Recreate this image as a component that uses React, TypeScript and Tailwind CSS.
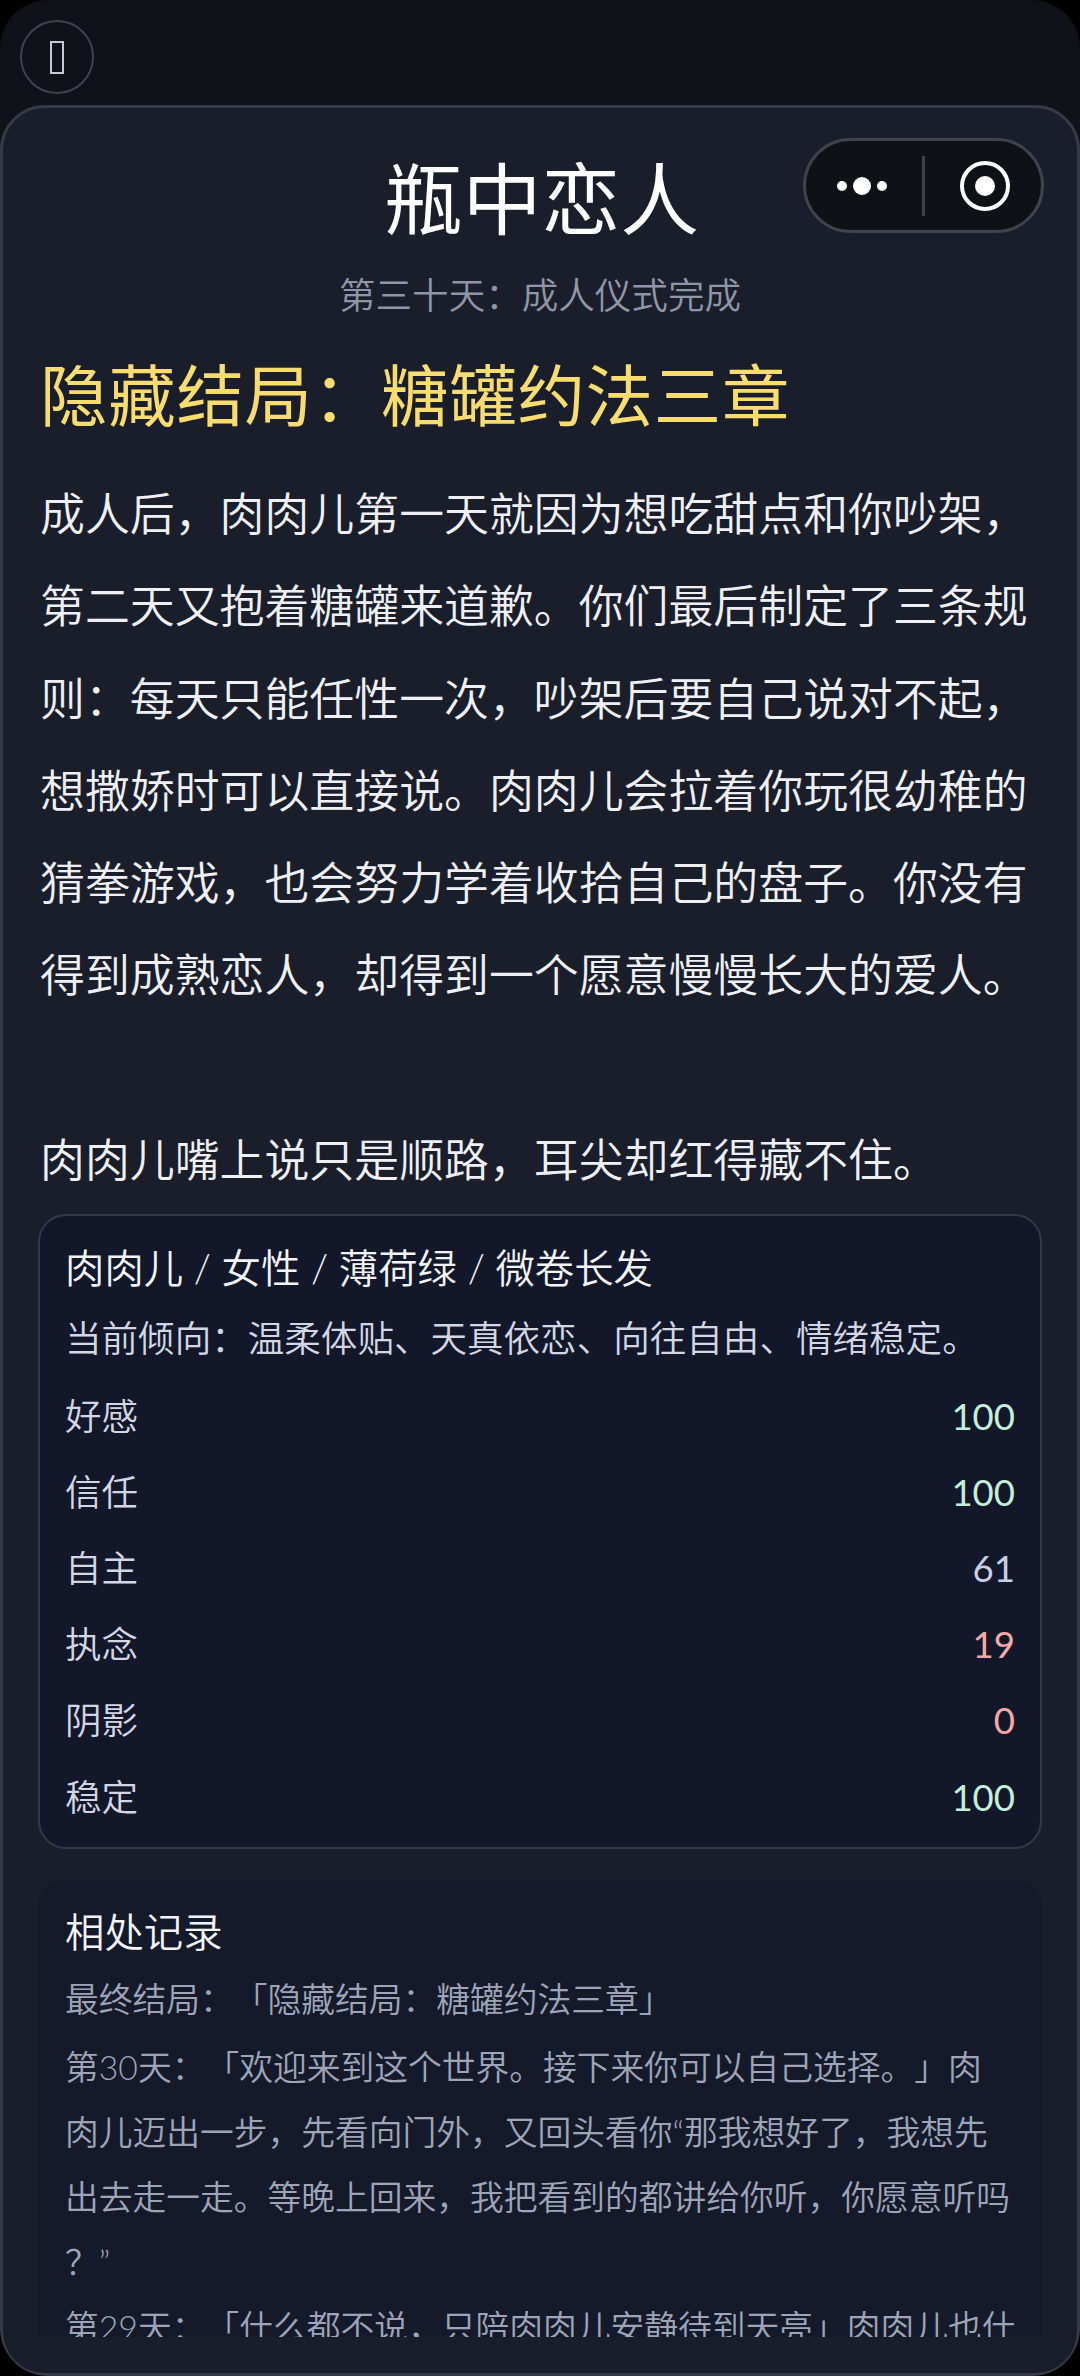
const font = { fontFamily: 'Lato, "Noto Sans CJK SC", sans-serif' };

const stats = [
  { label: '好感', value: 100, tone: 'text-[#c5efd8]' },
  { label: '信任', value: 100, tone: 'text-[#c5efd8]' },
  { label: '自主', value: 61, tone: 'text-[#c9cfe2]' },
  { label: '执念', value: 19, tone: 'text-[#f3a9a6]' },
  { label: '阴影', value: 0, tone: 'text-[#f3a9a6]' },
  { label: '稳定', value: 100, tone: 'text-[#c5efd8]' },
];

const story = `成人后，肉肉儿第一天就因为想吃甜点和你吵架，第二天又抱着糖罐来道歉。你们最后制定了三条规则：每天只能任性一次，吵架后要自己说对不起，想撒娇时可以直接说。肉肉儿会拉着你玩很幼稚的猜拳游戏，也会努力学着收拾自己的盘子。你没有得到成熟恋人，却得到一个愿意慢慢长大的爱人。

肉肉儿嘴上说只是顺路，耳尖却红得藏不住。`;

const logs = [
  '最终结局：「隐藏结局：糖罐约法三章」',
  '第30天：「欢迎来到这个世界。接下来你可以自己选择。」肉肉儿迈出一步，先看向门外，又回头看你“那我想好了，我想先出去走一走。等晚上回来，我把看到的都讲给你听，你愿意听吗？”',
  '第29天：「什么都不说，只陪肉肉儿安静待到天亮」肉肉儿也什么都没有说，只是靠着瓶壁慢慢睡着了。',
];

function Capsule() {
  return (
    <div className="absolute top-[30px] right-[33px] flex h-[95px] w-[241px] items-center rounded-full border-[3px] border-[#3f434e] bg-[#0f1117]">
      <svg width="235" height="89" viewBox="0 0 235 89" fill="none">
        <circle cx="36" cy="45" r="5" fill="#fff" />
        <circle cx="56" cy="45" r="9" fill="#fff" />
        <circle cx="76" cy="45" r="5" fill="#fff" />
        <rect x="116" y="15" width="3" height="60" fill="#3f434e" />
        <circle cx="179" cy="45" r="23" stroke="#fff" strokeWidth="4" />
        <circle cx="179" cy="45" r="10" fill="#fff" />
      </svg>
    </div>
  );
}

export default function App() {
  return (
    <div className="flex h-[2376px] w-[1080px] flex-col overflow-hidden bg-black font-[350] [text-spacing-trim:space-all]" style={font}>
      <div className="flex h-full flex-col overflow-hidden rounded-[48px] bg-[#0f1219]">
        {/* Top bar */}
        <header className="flex h-[105px] shrink-0 items-start pl-[20px] pt-[20px]">
          <div className="flex h-[74px] w-[74px] items-center justify-center rounded-full border-2 border-[#3f434e]">
            <span className="block h-[33px] w-[14px] border-2 border-[#c5c9d3]" />
          </div>
        </header>

        {/* Sheet */}
        <main className="relative flex min-h-0 flex-1 flex-col overflow-hidden rounded-[45px] border-[3px] border-[#363a46] bg-[#1a1e2a] px-[35px] pb-[36px]">
          <Capsule />
          <h1 className="mt-[41px] pl-[3px] text-center text-[78.75px] font-normal leading-[100px] text-white">瓶中恋人</h1>
          <p className="mt-[21px] text-center text-[36.56px] leading-[50px] text-[#8f96a8]">第三十天：成人仪式完成</p>
          <h2 className="mt-[25px] px-[2px] text-[67.5px] font-normal leading-[100px] tracking-[0.7px] text-[#f7dc6f]">隐藏结局：糖罐约法三章</h2>
          <p className="mt-[23px] whitespace-pre-wrap px-[2px] text-[44.9px] leading-[92.25px] text-[#eef0f6]">{story}</p>

          {/* Character */}
          <section className="mt-[8px] shrink-0 rounded-[28px] border-[2px] border-[#33394a] bg-[#12182a] px-[25px] pb-[12px] pt-[25px]">
            <div className="text-[39.38px] leading-[54px] text-[#f3f4f8]">肉肉儿 / 女性 / 薄荷绿 / 微卷长发</div>
            <div className="mt-[16px] text-[36.56px] leading-[54px] text-[#d3d7e4]">当前倾向：温柔体贴、天真依恋、向往自由、情绪稳定。</div>
            <div className="mt-[13px] flex flex-col">
              {stats.map((s) => (
                <div key={s.label} className="flex h-[76.2px] items-center justify-between text-[36.56px] text-[#d3d7e4]">
                  <span>{s.label}</span>
                  <span className={`font-normal ${s.tone}`}>{s.value}</span>
                </div>
              ))}
            </div>
          </section>

          {/* Log */}
          <section className="mt-[30px] min-h-0 flex-1 overflow-hidden rounded-t-[28px] bg-[#151a2a] px-[27px] pt-[26px]">
            <div className="text-[39.38px] leading-[54px] text-[#f3f4f8]">相处记录</div>
            <div className="mt-[8px] text-[33.75px] leading-[65px] text-[#9ea5b8] [line-break:anywhere]">
              {logs.map((l) => (
                <p key={l} className="first:mb-[3px] last:-mr-[6px]">{l}</p>
              ))}
            </div>
          </section>
        </main>
      </div>
    </div>
  );
}
